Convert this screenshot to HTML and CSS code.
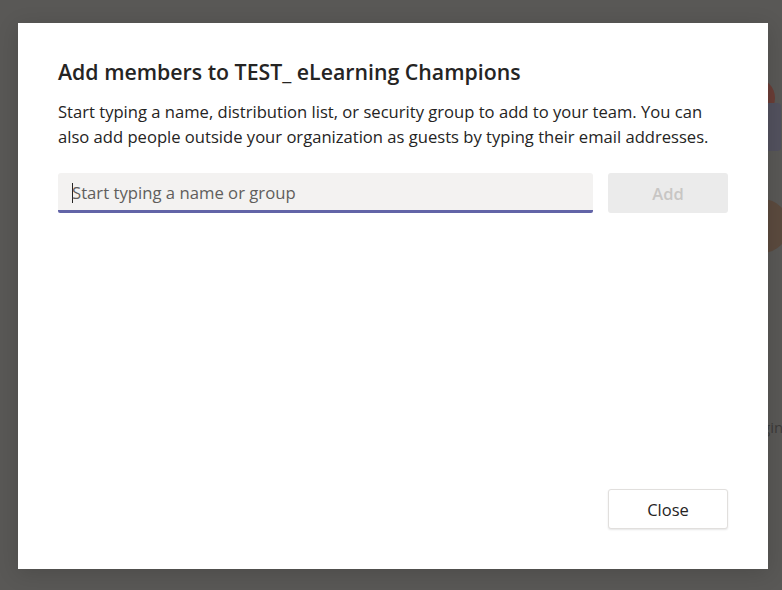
FILE: index.html
```html
<!DOCTYPE html>
<html>
<head>
<meta charset="utf-8">
<link rel="stylesheet" href="styles.css">
</head>
<body>
<div class="backdrop">
  <div class="bg-circle bg-red"></div>
  <div class="bg-rect"></div>
  <div class="bg-circle bg-brown"></div>
  <div class="bg-text">gin</div>
</div>
<div class="overlay">
  <div class="dialog">
    <h1 class="title">Add members to TEST_ eLearning Champions</h1>
    <p class="desc">Start typing a name, distribution list, or security group to add to your team. You can also add people outside your organization as guests by typing their email addresses.</p>
    <div class="row">
      <div class="input"><span class="caret"></span><span class="placeholder">Start typing a name or group</span></div>
      <button class="btn btn-add">Add</button>
    </div>
    <div class="spacer"></div>
    <div class="footer">
      <button class="btn btn-close">Close</button>
    </div>
  </div>
</div>
</body>
</html>
```
FILE: styles.css
```css
html, body {
  margin: 0;
  padding: 0;
  width: 782px;
  height: 590px;
  overflow: hidden;
  background: #595856;
  font-family: "Open Sans", "Noto Sans", sans-serif;
}
.backdrop {
  position: absolute;
  inset: 0;
}
.bg-circle {
  position: absolute;
  border-radius: 50%;
}
.bg-red {
  left: 735px;
  top: 78px;
  width: 40px;
  height: 40px;
  background: #6a3d36;
}
.bg-rect {
  position: absolute;
  left: 760px;
  top: 103px;
  width: 21px;
  height: 48px;
  border-radius: 4px;
  background: #52515e;
}
.bg-brown {
  left: 735px;
  top: 199px;
  width: 54px;
  height: 54px;
  background: #5b4a3e;
}
.bg-text {
  position: absolute;
  left: 762px;
  top: 417px;
  font-size: 15px;
  color: #3c3b3a;
}
.overlay {
  position: absolute;
  inset: 0;
  padding: 23px 14px 21px 18px;
}
.dialog {
  box-sizing: border-box;
  width: 750px;
  height: 546px;
  background: #ffffff;
  padding: 30px 40px 40px 40px;
  display: flex;
  flex-direction: column;
  box-shadow: 0 4px 20px rgba(0,0,0,0.15);
}
.title {
  margin: 0;
  font-size: 21.3px;
  font-weight: 600;
  line-height: 38px;
  color: #252423;
}
.desc {
  margin: 8px 0 0 0;
  font-size: 16.6px;
  line-height: 25px;
  color: #252423;
}
.row {
  margin-top: 24px;
  display: flex;
  gap: 15px;
}
.input {
  box-sizing: border-box;
  width: 535px;
  height: 40px;
  background: #f3f2f1;
  border-bottom: 3px solid #6264a7;
  border-radius: 3px 3px 2px 2px;
  display: flex;
  align-items: center;
  padding-left: 14px;
  padding-top: 2px;
}
.caret {
  width: 1px;
  height: 20px;
  background: #252423;
  margin-right: -1px;
}
.placeholder {
  font-size: 16.7px;
  color: #605e5c;
}
.btn {
  box-sizing: border-box;
  width: 120px;
  height: 40px;
  border-radius: 3px;
  font-family: "Open Sans", "Noto Sans", sans-serif;
  font-size: 16.5px;
  font-weight: 600;
  padding: 0;
}
.btn-add {
  background: #ebebeb;
  border: none;
  color: #c8c6c4;
}
.spacer {
  flex: 1;
}
.footer {
  display: flex;
  justify-content: flex-end;
}
.btn-close {
  background: #ffffff;
  border: 1px solid #e1dfdd;
  color: #252423;
  font-weight: 400;
  box-shadow: 0 1px 2px rgba(0,0,0,0.1);
}
```
